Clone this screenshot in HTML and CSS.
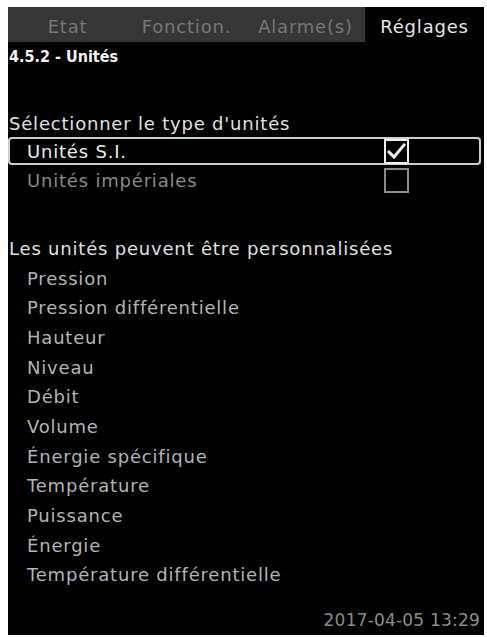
FILE: index.html
```html
<!DOCTYPE html>
<html lang="fr">
<head>
<meta charset="utf-8">
<link rel="stylesheet" href="styles.css">
</head>
<body>
<div class="screen">
  <div class="tabs">
    <div class="tab">Etat</div>
    <div class="tab">Fonction.</div>
    <div class="tab">Alarme(s)</div>
    <div class="tab active">Réglages</div>
  </div>
  <div class="title">4.5.2 - Unités</div>
  <div class="section first">Sélectionner le type d'unités</div>
  <div class="opt selected">
    <span class="opt-label">Unités S.I.</span>
    <span class="check on"><svg viewBox="0 0 21 21" width="21" height="21"><path d="M3 11 L8 16 L18 4" fill="none" stroke="#f2f2f2" stroke-width="3" stroke-linecap="square"/></svg></span>
  </div>
  <div class="opt">
    <span class="opt-label dim">Unités impériales</span>
    <span class="check"></span>
  </div>
  <div class="section second">Les unités peuvent être personnalisées</div>
  <ul class="items">
    <li>Pression</li>
    <li>Pression différentielle</li>
    <li>Hauteur</li>
    <li>Niveau</li>
    <li>Débit</li>
    <li>Volume</li>
    <li>Énergie spécifique</li>
    <li>Température</li>
    <li>Puissance</li>
    <li>Énergie</li>
    <li>Température différentielle</li>
  </ul>
  <div class="date">2017-04-05 13:29</div>
</div>
</body>
</html>
```
FILE: styles.css
```css
html, body {
  margin: 0;
  padding: 0;
  background: #fff;
}
.screen {
  margin: 7px 3px 0 8px;
  width: 476px;
  height: 628px;
  background: #000;
  display: flex;
  flex-direction: column;
  font-family: "DejaVu Sans", sans-serif;
  font-size: 18px;
  letter-spacing: 0.8px;
  color: #b4b4b4;
}
.tabs {
  display: flex;
  height: 35px;
  background: #363636;
}
.tab {
  flex: 1;
  display: flex;
  align-items: center;
  justify-content: center;
  padding-top: 3px;
  box-sizing: border-box;
  color: #777;
}
.tab.active {
  background: #000;
  color: #e6e6e6;
}
.title {
  height: 30px;
  line-height: 30px;
  padding-left: 1px;
  font-family: "DejaVu Sans Condensed", sans-serif;
  font-weight: bold;
  font-size: 16px;
  letter-spacing: 0;
  color: #f4f4f4;
}
.section {
  height: 27px;
  line-height: 27px;
  padding-left: 1px;
  color: #e0e0e0;
}
.section.first {
  margin-top: 38px;
}
.section.second {
  margin-top: 39px;
  height: 29.5px;
  line-height: 29.5px;
}
.opt {
  display: flex;
  align-items: center;
  height: 30px;
  padding-left: 17px;
  box-sizing: border-box;
  border: 2px solid transparent;
  margin-right: 3px;
}
.opt.selected {
  height: 28px;
  border-color: #cfcfcf;
  border-radius: 4px;
}
.opt-label {
  width: 357px;
  color: #ececec;
}
.opt-label.dim {
  color: #8a8a8a;
}
.check {
  width: 25px;
  height: 25px;
  box-sizing: border-box;
  border: 2px solid #8a8a8a;
  display: flex;
  align-items: center;
  justify-content: center;
}
.check.on {
  border-color: #f0f0f0;
}
.items {
  list-style: none;
  margin: 0;
  padding: 0 0 0 19px;
}
.items li {
  height: 29.7px;
  line-height: 29.7px;
}
.date {
  margin-top: auto;
  text-align: right;
  padding: 0 4px 5px 0;
  color: #8c8c8c;
  font-size: 17px;
  letter-spacing: 0.2px;
}
```
